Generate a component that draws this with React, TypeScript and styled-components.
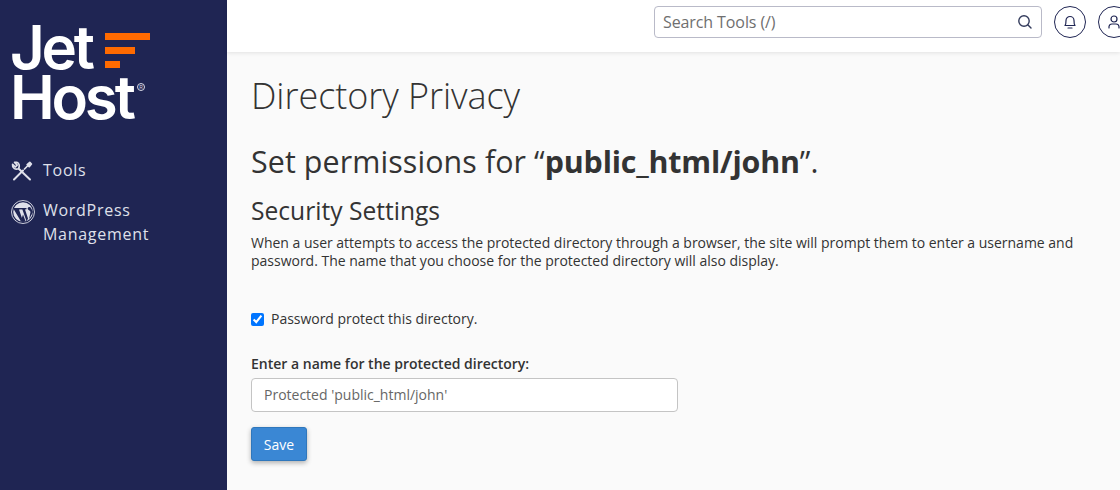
import styled, { createGlobalStyle } from "styled-components";

const GlobalStyle = createGlobalStyle`
  html, body {
    margin: 0;
    padding: 0;
    height: 100%;
    overflow: hidden;
  }
  body {
    font-family: "Open Sans", sans-serif;
    background: #fafafa;
    color: #333333;
  }
  * {
    box-sizing: border-box;
  }
`;

const Page = styled.div`
  display: flex;
  width: 1120px;
  height: 490px;
  overflow: hidden;
`;

const Sidebar = styled.aside`
  flex: 0 0 227px;
  background: #1f2553;
  display: flex;
  flex-direction: column;
`;

const Logo = styled.div`
  position: relative;
  height: 158px;
  padding: 22px 0 0 10px;
  color: #ffffff;
  font-family: Inter, sans-serif;
  font-weight: 600;
  font-size: 60px;
  line-height: 50px;
  letter-spacing: -3.2px;
`;

const LogoWord = styled.div`
  height: 50px;
`;

const LogoBars = styled.svg`
  position: absolute;
  left: 105px;
  top: 33px;
`;

const Registered = styled.span`
  position: absolute;
  left: 137px;
  top: 83px;
  width: 8px;
  height: 8px;
  border: 1px solid #d9dae6;
  border-radius: 50%;
  color: #d9dae6;
  font-family: "Liberation Sans", sans-serif;
  font-size: 5px;
  font-weight: 400;
  line-height: 6px;
  letter-spacing: 0;
  text-align: center;
`;

const Nav = styled.nav`
  display: flex;
  flex-direction: column;
  gap: 14px;
  padding-left: 11px;
`;

const NavItem = styled.a`
  display: flex;
  align-items: flex-start;
  color: #dfe0ea;
  font-size: 16px;
  line-height: 24px;
  letter-spacing: 0.72px;
`;

const NavIcon = styled.span<{ $height: number }>`
  flex: 0 0 32px;
  height: ${(p) => p.$height}px;
  display: flex;
  align-items: center;
  justify-content: flex-start;
`;

const Main = styled.div`
  flex: 1;
  min-width: 0;
  display: flex;
  flex-direction: column;
`;

const Header = styled.header`
  height: 52px;
  background: #ffffff;
  box-shadow: 0 1px 4px rgba(0, 0, 0, 0.1);
  display: flex;
  align-items: flex-start;
  padding: 6px 0 0 427px;
  gap: 12px;
`;

const SearchBox = styled.div`
  flex: 0 0 388px;
  height: 32px;
  border: 1px solid #b9bac8;
  border-radius: 4px;
  background: #ffffff;
  display: flex;
  align-items: center;
  justify-content: space-between;
  padding: 0 7px 0 8px;
  color: #6f6f6f;
  font-size: 16px;
  letter-spacing: -0.1px;
`;

const RoundButton = styled.div`
  flex: 0 0 32px;
  height: 32px;
  border: 1px solid #1f2553;
  border-radius: 50%;
  background: #ffffff;
  display: flex;
  align-items: center;
  justify-content: center;
`;

const Content = styled.main`
  padding: 19px 0 0 24px;
`;

const Title = styled.h1`
  margin: 0;
  font-size: 36px;
  font-weight: 300;
  line-height: 50px;
  letter-spacing: -0.05px;
  color: #333333;
`;

const Subtitle = styled.h2`
  margin: 19px 0 0;
  font-size: 30.4px;
  font-weight: 400;
  line-height: 44px;
  letter-spacing: 0.1px;
  color: #333333;

  strong {
    font-weight: 700;
    letter-spacing: -0.19px;
  }
`;

const SectionTitle = styled.h3`
  margin: 12px 0 0;
  font-size: 24.6px;
  font-weight: 400;
  line-height: 30px;
  color: #333333;
`;

const Description = styled.p`
  width: 840px;
  margin: 8px 0 0;
  font-size: 14px;
  line-height: 18px;
  letter-spacing: -0.012px;
  color: #333333;
`;

const CheckRow = styled.label`
  display: flex;
  align-items: center;
  gap: 7px;
  margin-top: 39px;
  font-size: 14px;
  line-height: 20px;
  letter-spacing: -0.03px;
`;

const CheckBox = styled.input`
  width: 13px;
  height: 13px;
  margin: 1px 0 0;
  accent-color: #0075ff;
`;

const FieldLabel = styled.label`
  display: block;
  margin-top: 25px;
  font-size: 14px;
  font-weight: 600;
  line-height: 20px;
`;

const TextInput = styled.input`
  display: block;
  width: 427px;
  height: 34px;
  margin-top: 4px;
  padding: 0 12px 2px;
  border: 1px solid #c4c4c4;
  border-radius: 4px;
  background: #ffffff;
  color: #666666;
  font-family: "Open Sans", sans-serif;
  font-size: 14px;
  outline: none;
`;

const SaveButton = styled.button`
  display: block;
  width: 56px;
  height: 34px;
  margin-top: 15px;
  border: 1px solid #2f77bc;
  border-radius: 3px;
  background: #3a87d4;
  box-shadow: 0 2px 5px rgba(0, 0, 0, 0.3);
  color: #ffffff;
  font-family: "Open Sans", sans-serif;
  font-size: 14px;
  padding: 0;
`;

export default function App() {
  return (
    <Page>
      <GlobalStyle />
      <Sidebar>
        <Logo>
          <LogoWord>Jet</LogoWord>
          <LogoWord>Host</LogoWord>
          <LogoBars width="45" height="35" viewBox="0 0 45 35">
            <rect x="0" y="0" width="45" height="7" fill="#ff6a00" />
            <rect x="0" y="14" width="30" height="7" fill="#ff6a00" />
            <rect x="0" y="28" width="15" height="7" fill="#ff6a00" />
          </LogoBars>
          <Registered>R</Registered>
        </Logo>
        <Nav>
          <NavItem>
            <NavIcon $height={26}>
              <svg width="22" height="20" viewBox="0 0 22 20" fill="none" stroke="#dfe0ea" strokeWidth="1.7" strokeLinecap="round" strokeLinejoin="round">
                <path d="M3 18.5 L12 9.5" strokeWidth="2" />
                <path d="M13.5 8 L17 4.5" />
                <path d="M16.2 3.6 L18.8 1.4 L20.4 3 L18.2 5.6 Z" fill="#dfe0ea" />
                <path d="M8 8 L19 18.5" strokeWidth="2" />
                <path d="M5.8 1.3 L3.6 1.4 L6.2 4.2 L4.4 6 L1.6 3.4 C1 7 4.4 9 7.4 7.8 C9 5 8.4 2.4 5.8 1.3 Z" />
              </svg>
            </NavIcon>
            Tools
          </NavItem>
          <NavItem>
            <NavIcon $height={28}>
              <svg width="24" height="24" viewBox="0 0 24 24">
                <circle cx="12" cy="12" r="11.5" fill="none" stroke="#dfe0ea" strokeWidth="0.9" />
                <circle cx="12" cy="12" r="9.8" fill="#dfe0ea" />
                <path d="M2 8 H9.4 V9.2 L8 9.5 L11.2 18.8 L10 21.5 Z" fill="#1f2553" />
                <path d="M8.2 8 H15.5 V9.2 L14 9.5 L17 18.5 L15.6 21.6 L11.4 9.5 L8.2 9.2 Z" fill="#1f2553" />
                <path d="M16.6 8.6 C17.6 6.5 19 6.8 20 8 L22 12 L18 19.4 L19.5 12 C19.5 10.5 16.5 10 16.6 8.6 Z" fill="#1f2553" />
                <path d="M12 14.5 L14.6 21.5 L12 22 L9.6 21.5 Z" fill="#1f2553" />
              </svg>
            </NavIcon>
            <span>
              WordPress
              <br />
              Management
            </span>
          </NavItem>
        </Nav>
      </Sidebar>
      <Main>
        <Header>
          <SearchBox>
            Search Tools (/)
            <svg width="18" height="18" viewBox="0 0 18 18" fill="none" stroke="#333b5c" strokeWidth="1.4" strokeLinecap="round">
              <circle cx="8" cy="8" r="5.2" />
              <path d="M12 12 L15 15" />
            </svg>
          </SearchBox>
          <RoundButton>
            <svg width="16" height="16" viewBox="0 0 16 16" fill="none" stroke="#1f2553" strokeWidth="1.2" strokeLinecap="round" strokeLinejoin="round">
              <path d="M3 11.5 C4 10.5 4 9 4 6.5 A4 4 0 0 1 12 6.5 C12 9 12 10.5 13 11.5 Z" />
              <path d="M6 14 H10" />
            </svg>
          </RoundButton>
          <RoundButton>
            <svg width="16" height="16" viewBox="0 0 16 16" fill="none" stroke="#1f2553" strokeWidth="1.2" strokeLinecap="round">
              <circle cx="8" cy="5" r="3" />
              <path d="M3 14 V12.5 A3 3 0 0 1 6 10 H10 A3 3 0 0 1 13 12.5 V14" />
            </svg>
          </RoundButton>
        </Header>
        <Content>
          <Title>Directory Privacy</Title>
          <Subtitle>
            Set permissions for “<strong>public_html/john</strong>”.
          </Subtitle>
          <SectionTitle>Security Settings</SectionTitle>
          <Description>
            When a user attempts to access the protected directory through a browser, the site will prompt them to enter a username and password. The name that you choose for the protected directory will also display.
          </Description>
          <CheckRow>
            <CheckBox type="checkbox" defaultChecked />
            Password protect this directory.
          </CheckRow>
          <FieldLabel>Enter a name for the protected directory:</FieldLabel>
          <TextInput defaultValue="Protected 'public_html/john'" />
          <SaveButton>Save</SaveButton>
        </Content>
      </Main>
    </Page>
  );
}
